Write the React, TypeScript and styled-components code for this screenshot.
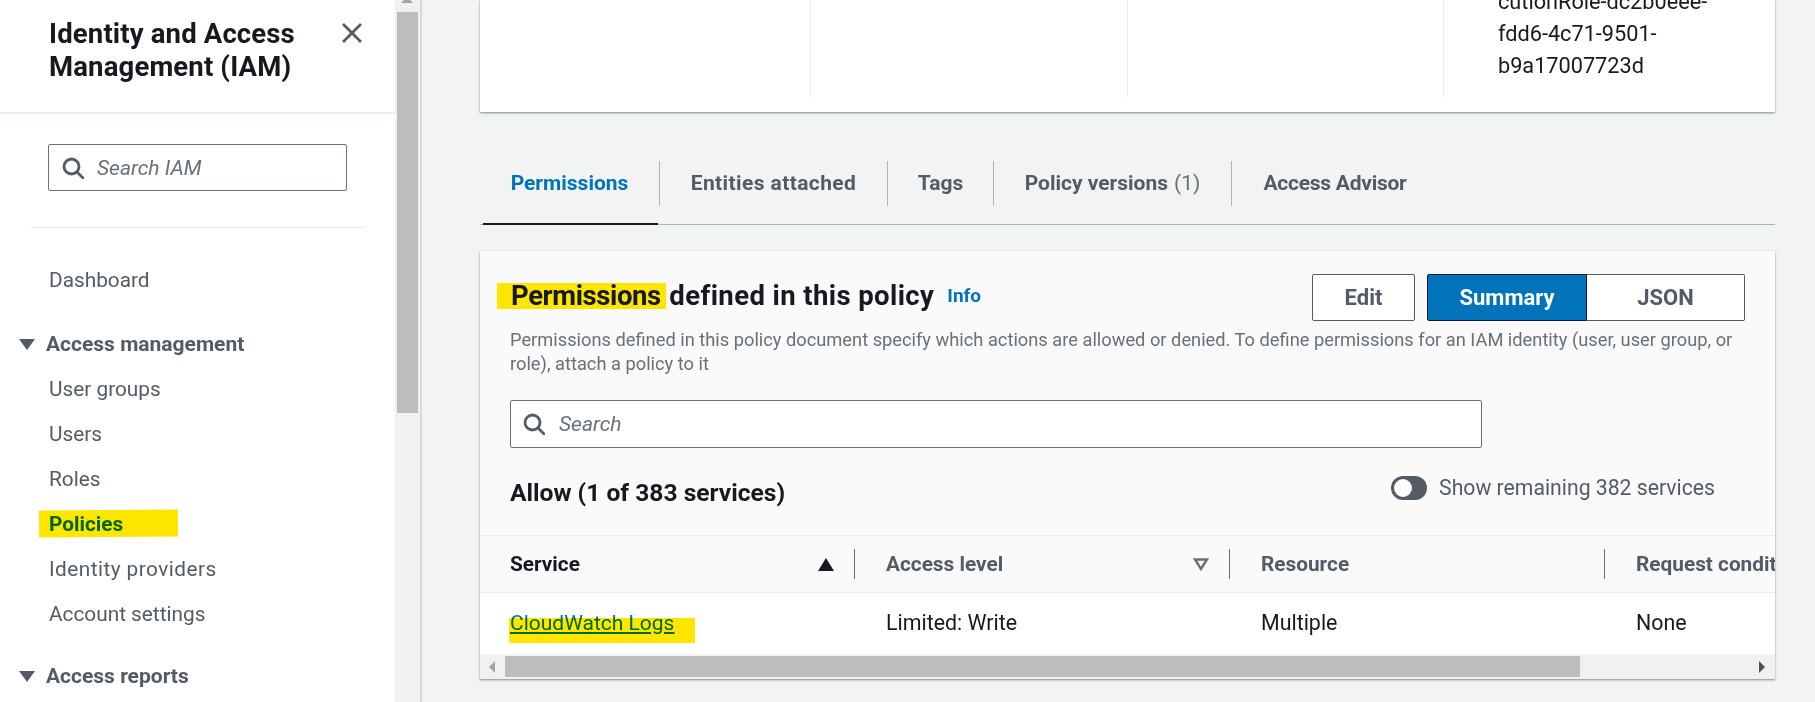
import React from "react";
import styled, { createGlobalStyle } from "styled-components";

const GlobalStyle = createGlobalStyle`
  html, body {
    margin: 0;
    height: 100%;
    overflow: hidden;
    background: #f2f3f3;
  }
  * {
    box-sizing: border-box;
  }
`;

const Page = styled.div`
  display: flex;
  width: 1815px;
  height: 702px;
  overflow: hidden;
  font-family: Roboto, "Liberation Sans", sans-serif;
  color: #16191f;
`;

const Sidebar = styled.aside`
  width: 395px;
  flex: none;
  background: #fff;
`;

const SideHeader = styled.div`
  display: flex;
  justify-content: space-between;
  height: 114px;
  padding: 17px 31px 0 49px;
  border-bottom: 2px solid #eaeded;
`;

const SideTitle = styled.h1`
  margin: 0;
  font-size: 27.5px;
  line-height: 33px;
  font-weight: 700;
  letter-spacing: 0.15px;
`;

const CloseButton = styled.span`
  display: block;
  width: 24px;
  height: 24px;
  margin-top: 4px;
  color: #545b64;
`;

const SideSearchWrap = styled.div`
  padding: 30px 48px 36px;
`;

const SearchBox = styled.div<{ $width: number; $height: number; $pad: number; $gap: number }>`
  display: flex;
  align-items: center;
  gap: ${(p) => p.$gap}px;
  width: ${(p) => p.$width}px;
  height: ${(p) => p.$height}px;
  padding-left: ${(p) => p.$pad}px;
  background: #fff;
  border: 1px solid #687078;
  border-radius: 2px;
`;

const SearchHint = styled.span`
  font-size: 21px;
  font-style: italic;
  color: #687078;
`;

const SideRule = styled.div`
  height: 1px;
  margin: 0 30px;
  background: #eaeded;
`;

const SideNav = styled.nav`
  display: flex;
  flex-direction: column;
  padding-top: 30px;
`;

const NavItem = styled.a<{ $active?: boolean; $track?: number }>`
  position: relative;
  display: block;
  height: 45px;
  padding-left: 49px;
  font-size: 20.8px;
  line-height: 45px;
  letter-spacing: ${(p) => p.$track ?? 0}px;
  color: ${(p) => (p.$active ? "#0073bb" : "#545b64")};
  font-weight: ${(p) => (p.$active ? 700 : 400)};
`;

const NavGroup = styled.div<{ $top: number; $bottom?: number }>`
  display: flex;
  align-items: center;
  gap: 11px;
  height: 45px;
  margin-top: ${(p) => p.$top}px;
  margin-bottom: ${(p) => p.$bottom ?? 0}px;
  padding-left: 19px;
  font-size: 21px;
  font-weight: 700;
  color: #545b64;
`;

const Marker = styled.span<{ $left: number; $top: number; $width: number; $height: number; $tilt?: number }>`
  position: absolute;
  left: ${(p) => p.$left}px;
  top: ${(p) => p.$top}px;
  width: ${(p) => p.$width}px;
  height: ${(p) => p.$height}px;
  background: #ffe600;
  mix-blend-mode: multiply;
  transform: rotate(${(p) => p.$tilt ?? 0}deg);
`;

const VScroll = styled.div`
  position: relative;
  width: 27px;
  flex: none;
  padding: 12px 2px 0;
  background: #f1f1f1;
  border-right: 2px solid #d5dbdb;
`;

const VThumb = styled.div`
  height: 401px;
  background: #bdbdbd;
`;

const VArrow = styled.span`
  position: absolute;
  top: -3px;
  left: 6px;
  border-left: 6px solid transparent;
  border-right: 6px solid transparent;
  border-bottom: 6px solid #a3a3a3;
`;

const Main = styled.main`
  flex: 1;
  padding: 0 40px 0 58px;
  min-width: 0;
`;

const TopCard = styled.section`
  display: grid;
  grid-template-columns: 331px 317px 316px 1fr;
  height: 112px;
  padding-bottom: 15px;
  background: #fff;
  box-shadow: 0 1px 2px #7f8c8d;
`;

const TopCol = styled.div<{ $plain?: boolean }>`
  border-right: ${(p) => (p.$plain ? "none" : "1px solid #eaeded")};
  overflow: hidden;
  display: flex;
  flex-direction: column;
  justify-content: flex-end;
  padding: 0 0 ${(p) => (p.$plain ? 15 : 0)}px ${(p) => (p.$plain ? 54 : 0)}px;
`;

const ArnLine = styled.div`
  font-size: 21.7px;
  line-height: 32px;
  white-space: nowrap;
`;

const TabBar = styled.div`
  display: flex;
  height: 113px;
  padding-top: 49px;
  border-bottom: 1px solid #aab7b8;
  margin-bottom: 26px;
`;

const Tab = styled.div<{ $active?: boolean; $width: number; $last?: boolean; $track?: number }>`
  position: relative;
  width: ${(p) => p.$width}px;
  height: 45px;
  flex: none;
  display: flex;
  align-items: center;
  justify-content: center;
  padding-bottom: 2px;
  font-size: 21px;
  font-weight: 700;
  white-space: nowrap;
  letter-spacing: ${(p) => p.$track ?? 0}px;
  color: ${(p) => (p.$active ? "#0073bb" : "#545b64")};
  border-right: ${(p) => (p.$last ? "none" : "1px solid #aab7b8")};
  &::after {
    content: "";
    display: ${(p) => (p.$active ? "block" : "none")};
    position: absolute;
    left: 3px;
    right: 1px;
    bottom: -19px;
    height: 2px;
    background: #16191f;
  }
`;

const TabCount = styled.span`
  font-weight: 400;
  color: #687078;
  margin-left: 6px;
`;

const Panel = styled.section`
  height: 428px;
  background: #fafafa;
  box-shadow: 0 1px 2px #7f8c8d;
`;

const PanelHead = styled.div`
  display: flex;
  justify-content: space-between;
  align-items: flex-start;
  padding: 23px 30px 0 17px;
`;

const PanelTitle = styled.h2`
  margin: 7px 0 0;
  display: flex;
  align-items: center;
  font-size: 27.5px;
  line-height: 30px;
  font-weight: 700;
  white-space: pre;
`;

const TitleMark = styled.span`
  display: block;
  background: #ffe600;
  padding: 0 5px 0 14px;
  line-height: 26px;
  letter-spacing: -0.4px;
`;

const TitleRest = styled.span`
  margin-left: -3.7px;
  letter-spacing: 0.4px;
`;

const InfoLink = styled.a`
  margin-left: 13px;
  font-size: 19px;
  font-weight: 700;
  color: #0073bb;
`;

const Buttons = styled.div`
  display: flex;
  gap: 12px;
`;

const Btn = styled.div<{ $width: number; $primary?: boolean; $side?: "left" | "right" | "all" }>`
  display: flex;
  align-items: center;
  justify-content: center;
  width: ${(p) => p.$width}px;
  height: 47px;
  font-size: 22px;
  font-weight: 700;
  background: ${(p) => (p.$primary ? "#0073bb" : "#fff")};
  color: ${(p) => (p.$primary ? "#fff" : "#545b64")};
  border: 1px solid ${(p) => (p.$primary ? "#16191f" : "#545b64")};
  border-radius: ${(p) => (p.$side === "left" ? "2px 0 0 2px" : p.$side === "right" ? "0 2px 2px 0" : "2px")};
  border-left-width: ${(p) => (p.$side === "right" ? 0 : 1)}px;
`;

const Segment = styled.div`
  display: flex;
`;

const Description = styled.p`
  margin: 7px 30px 0;
  font-size: 18.27px;
  line-height: 24px;
  color: #687078;
`;

const SearchRow = styled.div`
  padding: 24px 30px 0;
`;

const AllowRow = styled.div`
  display: flex;
  justify-content: space-between;
  padding: 29px 60px 0 30px;
  height: 87px;
`;

const AllowTitle = styled.h3`
  margin: 0;
  font-size: 24.6px;
  line-height: 32px;
  font-weight: 700;
`;

const ToggleLabel = styled.label`
  display: flex;
  align-items: center;
  gap: 12px;
  height: 24px;
  margin-top: -1px;
  font-size: 21.2px;
  color: #545b64;
`;

const ToggleText = styled.span`
  margin-bottom: 2px;
`;

const ToggleTrack = styled.span`
  display: flex;
  align-items: center;
  width: 36px;
  height: 24px;
  padding-left: 3px;
  border-radius: 12px;
  background: #545b64;
`;

const ToggleKnob = styled.span`
  display: block;
  width: 18px;
  height: 18px;
  border-radius: 50%;
  background: #fff;
`;

const TableHead = styled.div`
  display: grid;
  grid-template-columns: 375px 375px 375px 1fr;
  height: 58px;
  border-top: 1px solid #eaeded;
  border-bottom: 1px solid #eaeded;
  overflow: hidden;
`;

const HeadCell = styled.div<{ $sorted?: boolean; $first?: boolean }>`
  display: flex;
  align-items: center;
  padding-left: ${(p) => (p.$first ? 30 : 31)}px;
  font-size: 20.8px;
  font-weight: 700;
  white-space: nowrap;
  min-width: 0;
  color: ${(p) => (p.$sorted ? "#16191f" : "#545b64")};
`;

const HeadName = styled.span`
  flex: 1;
`;

const HeadDivider = styled.span`
  width: 1px;
  height: 30px;
  margin-left: 20px;
  background: #687078;
`;

const TableRow = styled.div`
  display: grid;
  grid-template-columns: 375px 375px 375px 1fr;
  height: 61px;
  padding-bottom: 2px;
  align-items: center;
  background: #fff;
  font-size: 21.4px;
`;

const RowCell = styled.div<{ $first?: boolean }>`
  padding-left: ${(p) => (p.$first ? 30 : 31)}px;
`;

const ServiceLink = styled.a`
  position: relative;
  font-size: 21px;
  color: #0073bb;
  text-decoration: underline;
`;

const HScroll = styled.div`
  display: flex;
  align-items: center;
  height: 25px;
  background: #f1f1f1;
`;

const HThumb = styled.div`
  width: 1075px;
  height: 21px;
  margin-left: 10px;
  background: #bdbdbd;
`;

const HArrow = styled.span<{ $dir: "left" | "right" }>`
  margin: 0 ${(p) => (p.$dir === "left" ? 0 : 10)}px 0 ${(p) => (p.$dir === "left" ? "9px" : "auto")};
  border-top: 6px solid transparent;
  border-bottom: 6px solid transparent;
  border-right: ${(p) => (p.$dir === "left" ? "6px solid #a3a3a3" : "none")};
  border-left: ${(p) => (p.$dir === "right" ? "6px solid #505050" : "none")};
`;

const SearchIcon = ({ size }: { size: number }) => (
  <svg width={size} height={size} viewBox="0 0 22 22" fill="none" stroke="#545b64" strokeWidth="2.8">
    <circle cx="9.5" cy="9.5" r="7.5" />
    <path d="M15 15l6 6" strokeLinecap="round" />
  </svg>
);

const Caret = () => (
  <svg width="16" height="12" viewBox="0 0 16 12">
    <path d="M0 1h16L8 12z" fill="#545b64" />
  </svg>
);

const SortUp = () => (
  <svg width="16" height="13" viewBox="0 0 16 13">
    <path d="M8 0l8 13H0z" fill="#16191f" />
  </svg>
);

const SortDown = () => (
  <svg width="16" height="13" viewBox="0 0 16 13" fill="none">
    <path d="M2 1.5h12L8 11z" stroke="#687078" strokeWidth="2.4" />
  </svg>
);

export default function App() {
  return (
    <Page>
      <GlobalStyle />
      <Sidebar>
        <SideHeader>
          <SideTitle>
            Identity and Access
            <br />
            Management (IAM)
          </SideTitle>
          <CloseButton>
            <svg width="24" height="24" viewBox="0 0 24 24" stroke="currentColor" strokeWidth="2.8">
              <path d="M3 3l18 18M21 3L3 21" />
            </svg>
          </CloseButton>
        </SideHeader>
        <SideSearchWrap>
          <SearchBox $width={299} $height={47} $pad={13} $gap={13}>
            <SearchIcon size={22} />
            <SearchHint>Search IAM</SearchHint>
          </SearchBox>
        </SideSearchWrap>
        <SideRule />
        <SideNav>
          <NavItem>Dashboard</NavItem>
          <NavGroup $top={18} $bottom={1}>
            <Caret />
            Access management
          </NavGroup>
          <NavItem>User groups</NavItem>
          <NavItem>Users</NavItem>
          <NavItem>Roles</NavItem>
          <NavItem $active>
            Policies
            <Marker $left={39} $top={8} $width={139} $height={27} $tilt={-0.4} />
          </NavItem>
          <NavItem $track={0.45}>Identity providers</NavItem>
          <NavItem>Account settings</NavItem>
          <NavGroup $top={16}>
            <Caret />
            Access reports
          </NavGroup>
        </SideNav>
      </Sidebar>
      <VScroll>
        <VArrow />
        <VThumb />
      </VScroll>
      <Main>
        <TopCard>
          <TopCol />
          <TopCol />
          <TopCol />
          <TopCol $plain>
            <ArnLine>cutionRole-dc2b0eee-</ArnLine>
            <ArnLine>fdd6-4c71-9501-</ArnLine>
            <ArnLine>b9a17007723d</ArnLine>
          </TopCol>
        </TopCard>
        <TabBar>
          <Tab $active $width={180}>Permissions</Tab>
          <Tab $width={228} $track={0.4}>Entities attached</Tab>
          <Tab $width={106}>Tags</Tab>
          <Tab $width={238}>
            Policy versions<TabCount>(1)</TabCount>
          </Tab>
          <Tab $width={206} $last $track={-0.25}>Access Advisor</Tab>
        </TabBar>
        <Panel>
          <PanelHead>
            <PanelTitle>
              <TitleMark>Permissions</TitleMark>
              <TitleRest> defined in this policy</TitleRest>
              <InfoLink>Info</InfoLink>
            </PanelTitle>
            <Buttons>
              <Btn $width={103} $side="all">Edit</Btn>
              <Segment>
                <Btn $width={160} $primary $side="left">Summary</Btn>
                <Btn $width={158} $side="right">JSON</Btn>
              </Segment>
            </Buttons>
          </PanelHead>
          <Description>
            Permissions defined in this policy document specify which actions are allowed or denied. To define
            permissions for an IAM identity (user, user group, or role), attach a policy to it
          </Description>
          <SearchRow>
            <SearchBox $width={972} $height={48} $pad={12} $gap={14}>
              <SearchIcon size={22} />
              <SearchHint>Search</SearchHint>
            </SearchBox>
          </SearchRow>
          <AllowRow>
            <AllowTitle>Allow (1 of 383 services)</AllowTitle>
            <ToggleLabel>
              <ToggleTrack>
                <ToggleKnob />
              </ToggleTrack>
              <ToggleText>Show remaining 382 services</ToggleText>
            </ToggleLabel>
          </AllowRow>
          <TableHead>
            <HeadCell $first $sorted>
              <HeadName>Service</HeadName>
              <SortUp />
              <HeadDivider />
            </HeadCell>
            <HeadCell>
              <HeadName>Access level</HeadName>
              <SortDown />
              <HeadDivider />
            </HeadCell>
            <HeadCell>
              <HeadName>Resource</HeadName>
              <HeadDivider />
            </HeadCell>
            <HeadCell>Request condition</HeadCell>
          </TableHead>
          <TableRow>
            <RowCell $first>
              <ServiceLink>
                CloudWatch Logs
                <Marker $left={-1} $top={7} $width={186} $height={25} />
              </ServiceLink>
            </RowCell>
            <RowCell>Limited: Write</RowCell>
            <RowCell>Multiple</RowCell>
            <RowCell>None</RowCell>
          </TableRow>
          <HScroll>
            <HArrow $dir="left" />
            <HThumb />
            <HArrow $dir="right" />
          </HScroll>
        </Panel>
      </Main>
    </Page>
  );
}
